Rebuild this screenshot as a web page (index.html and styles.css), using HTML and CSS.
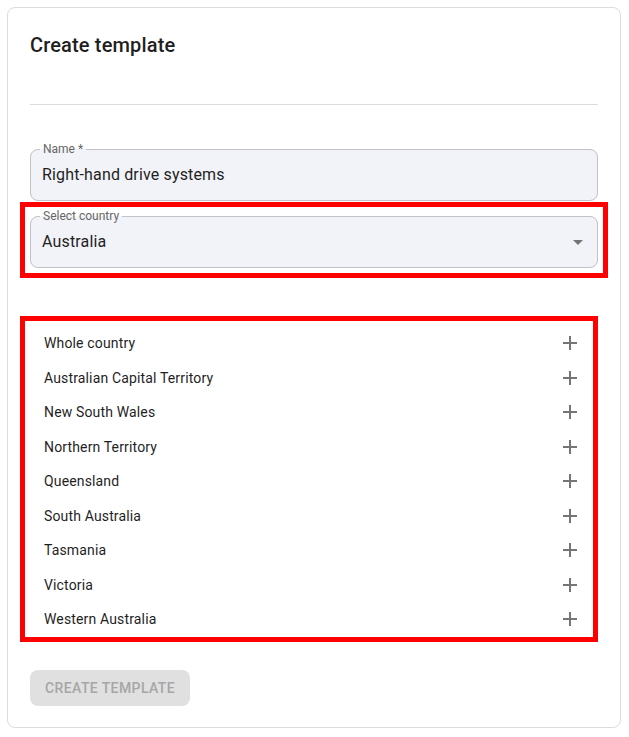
FILE: index.html
```html
<!DOCTYPE html>
<html lang="en">
<head>
  <meta charset="UTF-8">
  <meta name="viewport" content="width=device-width, initial-scale=1.0">
  <title>Create template</title>
  <link rel="stylesheet" href="styles.css">
</head>
<body>
  <div class="card">
    <h1 class="card-title">Create template</h1>
    <hr class="divider">

    <fieldset class="field">
      <legend>Name *</legend>
      <div class="field-row">
        <span class="field-value">Right-hand drive systems</span>
      </div>
    </fieldset>

    <div class="highlight highlight-select">
      <fieldset class="field">
        <legend>Select country</legend>
        <div class="field-row">
          <span class="field-value">Australia</span>
          <svg class="arrow" viewBox="0 0 24 24" width="24" height="24"><path d="M7 10l5 5 5-5z"/></svg>
        </div>
      </fieldset>
    </div>

    <div class="highlight highlight-list">
      <ul class="region-list">
        <li><span>Whole country</span><svg viewBox="0 0 24 24" width="24" height="24"><path d="M19 13h-6v6h-2v-6H5v-2h6V5h2v6h6v2z"/></svg></li>
        <li><span>Australian Capital Territory</span><svg viewBox="0 0 24 24" width="24" height="24"><path d="M19 13h-6v6h-2v-6H5v-2h6V5h2v6h6v2z"/></svg></li>
        <li><span>New South Wales</span><svg viewBox="0 0 24 24" width="24" height="24"><path d="M19 13h-6v6h-2v-6H5v-2h6V5h2v6h6v2z"/></svg></li>
        <li><span>Northern Territory</span><svg viewBox="0 0 24 24" width="24" height="24"><path d="M19 13h-6v6h-2v-6H5v-2h6V5h2v6h6v2z"/></svg></li>
        <li><span>Queensland</span><svg viewBox="0 0 24 24" width="24" height="24"><path d="M19 13h-6v6h-2v-6H5v-2h6V5h2v6h6v2z"/></svg></li>
        <li><span>South Australia</span><svg viewBox="0 0 24 24" width="24" height="24"><path d="M19 13h-6v6h-2v-6H5v-2h6V5h2v6h6v2z"/></svg></li>
        <li><span>Tasmania</span><svg viewBox="0 0 24 24" width="24" height="24"><path d="M19 13h-6v6h-2v-6H5v-2h6V5h2v6h6v2z"/></svg></li>
        <li><span>Victoria</span><svg viewBox="0 0 24 24" width="24" height="24"><path d="M19 13h-6v6h-2v-6H5v-2h6V5h2v6h6v2z"/></svg></li>
        <li><span>Western Australia</span><svg viewBox="0 0 24 24" width="24" height="24"><path d="M19 13h-6v6h-2v-6H5v-2h6V5h2v6h6v2z"/></svg></li>
      </ul>
    </div>

    <button class="btn" disabled>Create template</button>
  </div>
</body>
</html>
```

FILE: styles.css
```css
* {
  margin: 0;
  padding: 0;
  box-sizing: border-box;
}

body {
  font-family: Roboto, "Liberation Sans", sans-serif;
  background: #fff;
  color: #1f1f1f;
  padding: 7px;
}

.card {
  width: 614px;
  border: 1px solid #dcdcdc;
  border-radius: 8px;
  padding: 25px 22px 21px;
  display: flex;
  flex-direction: column;
}

.card-title {
  font-size: 20px;
  font-weight: 500;
  line-height: 24px;
  letter-spacing: 0.15px;
  color: #1f1f1f;
}

.divider {
  border: none;
  border-top: 1px solid #dcdcdc;
  margin: 47px 0 38px;
}

.field {
  border: 1px solid #c2c3c8;
  border-radius: 8px;
  background: #f2f3f8;
  padding: 8px 8px 13px 11px;
  min-width: 0;
}

.field legend {
  font-size: 12px;
  line-height: 12px;
  color: #666;
  padding: 0 3px;
  margin-left: -2px;
}

.field-row {
  display: flex;
  align-items: center;
  justify-content: space-between;
  height: 24px;
}

.field-value {
  font-size: 16px;
  line-height: 24px;
  letter-spacing: 0.15px;
}

.arrow {
  fill: #757575;
  margin-right: -1px;
}

.highlight {
  border: 5px solid #ff0000;
  margin-left: -10px;
}

.highlight-select {
  margin-top: 1px;
  margin-right: -10px;
  padding: 3px 5px 5px;
}

.highlight-list {
  margin-top: 38px;
  padding: 5px 0 0;
}

.region-list {
  list-style: none;
}

.region-list li {
  display: flex;
  align-items: center;
  justify-content: space-between;
  height: 34.5px;
  padding: 0 11px 0 19px;
  font-size: 14px;
  letter-spacing: 0.15px;
}

.region-list svg {
  fill: #757575;
}

.btn {
  align-self: flex-start;
  margin-top: 28px;
  height: 36px;
  padding: 0 15px;
  border: none;
  border-radius: 8px;
  background: #e0e0e0;
  color: #a6a6a6;
  font-family: Roboto, "Liberation Sans", sans-serif;
  font-size: 14px;
  font-weight: 500;
  letter-spacing: 0.4px;
  text-transform: uppercase;
}
```
